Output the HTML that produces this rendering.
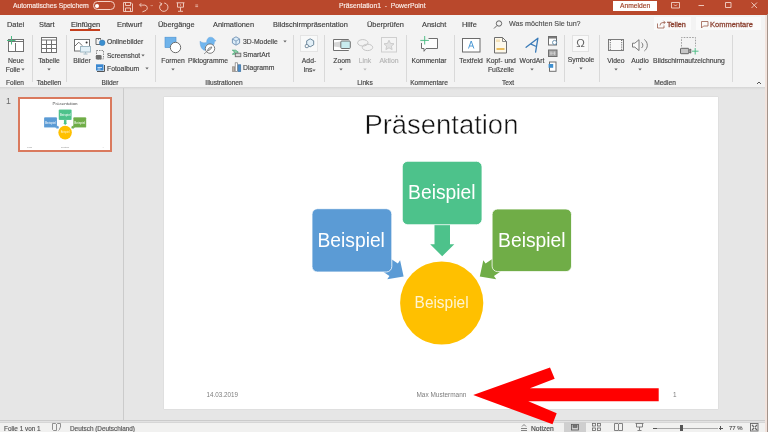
<!DOCTYPE html>
<html><head><meta charset="utf-8">
<style>
*{margin:0;padding:0;box-sizing:border-box}
html,body{width:768px;height:432px;overflow:hidden;background:#e6e6e6;font-family:"Liberation Sans",sans-serif;color:#444}
.a{will-change:transform;-webkit-text-stroke:0.15px currentColor}
.a{position:absolute;white-space:nowrap}
#title{left:0;top:0;width:768px;height:15px;background:#b9482c}
#tabs{left:0;top:15px;width:768px;height:16px;background:#f3f3f3}
#ribbon{left:0;top:31px;width:768px;height:56px;background:#f3f3f3}
#rshadow{left:0;top:87px;width:768px;height:3px;background:linear-gradient(#d4d4d4,#e0e0e0 60%,#e6e6e6)}
#status{left:0;top:420px;width:768px;height:12px;background:linear-gradient(#cbcbcb 0,#cbcbcb 1px,#e2e2e2 1px,#e2e2e2 2px,#d6d6d6 2px,#d6d6d6 3px,#f1f1f0 3px)}
#thumbs{left:0;top:88px;width:124px;height:330px;background:#e6e6e6;border-right:1px solid #cfcfcf}
.tab{font-size:7.4px;line-height:9px;top:19.6px;color:#3d3d3d}
.lbl{font-size:6.8px;color:#444}
.grp{font-size:6.8px;color:#555;top:79px}
.sep{width:1px;background:#d8d8d8;top:35px;height:49px}
</style></head><body>
<div class="a" id="title"></div>
<div class="a" id="tabs"></div>
<div class="a" id="ribbon"></div>
<div class="a" id="thumbs"></div>
<div class="a" id="rshadow"></div>
<div class="a" style="left:123px;top:88px;width:1px;height:332px;background:#cbcbcb"></div>
<div class="a" id="status"></div>


<!-- title bar content -->
<div class="a" style="left:12.5px;top:1.1px;font-size:6.7px;line-height:9px;color:#fbeee9">Automatisches Speichern</div>
<div class="a" style="left:93px;top:1.2px;width:21.6px;height:8.8px;border:0.9px solid #f6d2c6;border-radius:4.4px"></div>
<div class="a" style="left:95.2px;top:3.5px;width:4px;height:4px;background:#fff;border-radius:50%"></div>
<svg class="a" style="left:116px;top:0" width="90" height="15" viewBox="116 0 90 15" fill="none" stroke="#f4d3c6" stroke-width="0.9">
 <path d="M123.5 2.5h7.5l1.5 1.5v7.5h-9z M125.5 2.5v3h5v-3 M125.5 11.5v-3.5h5v3.5"/>
 <path d="M141.2 3.2l-1.7 1.9 1.9 1.6 M139.8 5.1h5a2.9 2.9 0 0 1 1.2 5.3l-3.6 1.5"/>
 <path d="M150.8 5.2l.9.9.9-.9" stroke-width="0.7"/>
 <path d="M161.6 3.6a4.2 4.2 0 1 0 2.6-.6 M159.6 2.6l2.2 1-1 2.1"/>
 <path d="M176.5 2.8h8 M177.5 2.8v4.4h6v-4.4 M180.5 7.2v3.8 M178 11.3h5 M180.5 4.4v1.2"/>
 <path d="M195.3 5h2.8 M195.3 6.6h2.8" stroke-width="0.7"/>
</svg>
<div class="a" style="left:339px;top:1.2px;font-size:6.8px;line-height:9px;color:#fbeee9">Präsentation1&nbsp; - &nbsp;PowerPoint</div>
<div class="a" style="left:613px;top:1px;width:44px;height:10px;background:#fff"></div>
<div class="a" style="left:620px;top:0.8px;font-size:6.7px;line-height:9px;color:#9e3f24">Anmelden</div>
<svg class="a" style="left:665px;top:0" width="103" height="15" viewBox="665 0 103 15" fill="none" stroke="#f3d4c8" stroke-width="0.9">
 <path d="M671.5 2.5h8v5.5h-8z M674 4.5l1.5 1.5 1.5-1.5"/>
 <path d="M698.5 5.5h5.5"/>
 <path d="M725.5 2.5h5.5v5h-5.5z"/>
 <path d="M751.5 2.5l5.5 5.5 M757 2.5l-5.5 5.5"/>
</svg>
<div class="a" style="left:765px;top:15px;width:2px;height:417px;background:#f2e3dc"></div>
<div class="a" style="left:767px;top:14px;width:1px;height:418px;background:#a3948c"></div>
<!-- tabs -->
<div class="a tab" style="left:7px">Datei</div>
<div class="a tab" style="left:39px">Start</div>
<div class="a tab" style="left:70.5px;color:#333">Einfügen</div>
<div class="a" style="left:70px;top:29px;width:30px;height:1.5px;background:#c43e1c"></div>
<div class="a tab" style="left:117px">Entwurf</div>
<div class="a tab" style="left:158px">Übergänge</div>
<div class="a tab" style="left:213px">Animationen</div>
<div class="a tab" style="left:273px">Bildschirmpräsentation</div>
<div class="a tab" style="left:366.5px">Überprüfen</div>
<div class="a tab" style="left:421.5px">Ansicht</div>
<div class="a tab" style="left:461.5px">Hilfe</div>
<svg class="a" style="left:492px;top:19px" width="12" height="12" fill="none" stroke="#555" stroke-width="0.9"><circle cx="7" cy="4.5" r="2.7"/><path d="M5 6.5l-3 3"/></svg>
<div class="a tab" style="left:508.5px;font-size:7.15px;color:#505050">Was möchten Sie tun?</div>
<div class="a" style="left:654px;top:17px;width:37px;height:13px;background:#fafafa"></div>
<svg class="a" style="left:656px;top:18px" width="10" height="12" fill="none" stroke="#9a5a4a" stroke-width="0.8"><path d="M1.5 5.5v4.5h6.5v-2.5 M4 7.5a3 3 0 0 1 3-3h2 M7.5 2.8l1.7 1.7-1.7 1.7"/></svg>
<div class="a" style="left:666.8px;top:19.5px;font-size:7.2px;line-height:9px;color:#8e4535;-webkit-text-stroke:0.35px #8e4535">Tellen</div>
<div class="a" style="left:696px;top:17px;width:65px;height:13px;background:#fafafa"></div>
<svg class="a" style="left:700px;top:19px" width="10" height="10" fill="none" stroke="#9a5a4a" stroke-width="0.8"><path d="M1.5 2.5h6.5v4.5h-4.5l-2 2z"/></svg>
<div class="a" style="left:710px;top:19.6px;font-size:7.5px;line-height:9px;color:#8e4535;-webkit-text-stroke:0.3px #8e4535">Kommentare</div>

<!-- ribbon -->
<svg class="a" style="left:0;top:0" width="768" height="90" viewBox="0 0 768 90">
<g fill="none" stroke-width="1">
 <!-- Neue Folie -->
 <rect x="8.5" y="39.5" width="15" height="12" fill="#fff" stroke="#717171"/>
 <path d="M8.5 41.5h15 M15.5 43v8.5" stroke="#717171"/>
 <path d="M11.5 36v8.5 M7 40.5h8.5" stroke="#4cb883"/>
 <!-- Tabelle -->
 <rect x="41.5" y="37.5" width="15" height="15" fill="#fff" stroke="#717171"/>
 <path d="M41.5 40h15 M41.5 44.5h15 M41.5 48.5h15 M46.5 40v12.5 M51.5 40v12.5" stroke="#717171"/>
 <!-- Bilder -->
 <rect x="74.5" y="39.5" width="15" height="11.5" fill="#fff" stroke="#717171"/>
 <path d="M74.5 46.5l4.3-4.3 3.5 3.5" stroke="#717171"/>
 <circle cx="86.6" cy="42.5" r="1" fill="#333" stroke="none"/>
 <rect x="80.5" y="46.5" width="10" height="5.5" fill="#e3f1f8" stroke="#9fb8c4"/>
 <path d="M85.5 52v1.5 M83.5 54h4" stroke="#9fb8c4"/>
 <!-- Onlinebilder -->
 <path d="M101 38.5h-5v6h4" stroke="#6b6b6b"/>
 <path d="M98.5 38v2 M100.5 38v2" stroke="#6b6b6b" stroke-width="0.7"/>
 <circle cx="102.2" cy="42.8" r="2.8" fill="#3b8fd0" stroke="#2a6ea8" stroke-width="0.5"/>
 <!-- Screenshot -->
 <rect x="96.5" y="50.5" width="7" height="8.5" stroke="#8a8a8a" stroke-dasharray="1.5 1"/>
 <rect x="95.8" y="55" width="5.8" height="4.5" rx="1.2" fill="#6e6e6e" stroke="none"/>
 <!-- Fotoalbum -->
 <path d="M97 71.5h7.5v-6.5" stroke="#555"/>
 <rect x="96" y="64.3" width="7.5" height="6.2" fill="#3a87d0" stroke="none"/>
 <path d="M97.5 67.5h4.5 M97.5 69h3" stroke="#e8f2fb" stroke-width="0.8"/>
 <!-- Formen -->
 <rect x="165" y="37.2" width="11" height="10.4" fill="#6fb3ea" stroke="#4a90d0" stroke-width="0.6"/>
 <circle cx="175.5" cy="47.5" r="5.2" fill="#fff" stroke="#6b6b6b"/>
 <!-- Piktogramme -->
 <path d="M200 41.2c2 1.6 4.5 2 6.6 1.2 0-3.2 1.6-5.2 3.9-5.2 2.2 0 3.5 1.3 4 2.6l1.6 .9-1.6 .9c0 3.5-2.3 6-5.3 7.2l-4.6 1.5c-2.8-.8-4.6-4-4.6-9.1z" fill="#71b6ee" stroke="#5a9bd6" stroke-width="0.4"/>
 <circle cx="210" cy="48.6" r="4.7" fill="#fff" stroke="#6e6e6e" stroke-width="0.9"/>
 <path d="M204 54l7.8-7 M207.5 50.6c.3-2 2-3.6 4.3-3.6-.3 2.1-2 3.5-4.3 3.6z" stroke="#6e6e6e" stroke-width="0.7"/>
 <!-- 3D Modelle -->
 <path d="M236 36.8l3.6 2.1v4.2l-3.6 2.1-3.6-2.1v-4.2z" fill="#dcedf9" stroke="#6e90b3" stroke-width="0.9"/>
 <path d="M232.6 39.1l3.4 2 3.4-2 M236 41.1v3.9" stroke="#6e90b3" stroke-width="0.8"/>
 <!-- SmartArt -->
 <path d="M232.3 50.2h3.5l2.5 2-2.5 2h-3.5l2.5-2z" fill="#8fd0a8" stroke="#3aa56e" stroke-width="0.7"/>
 <rect x="235.3" y="53.2" width="5.5" height="3.5" fill="#d8d8d8" stroke="#6e6e6e" stroke-width="0.9"/>
 <!-- Diagramm -->
 <rect x="232.5" y="66.8" width="2.2" height="4.7" fill="#b9b0a6" stroke="#8a8179" stroke-width="0.6"/>
 <rect x="235.2" y="62.8" width="2.4" height="8.7" fill="#fff" stroke="#777" stroke-width="0.7"/>
 <rect x="238.1" y="64.8" width="2.6" height="6.7" fill="#4a8fcf" stroke="#3a6fa0" stroke-width="0.7"/>
 <!-- Add-ins -->
 <rect x="300.5" y="35.5" width="17" height="16" fill="#f8f9f9" stroke="#e4e4e4"/>
 <path d="M310.2 38.8l3.5 2v4l-3.5 2-3.5-2v-4z" fill="#e3f0f8" stroke="#607d92" stroke-width="0.9"/>
 <rect x="305.3" y="44.6" width="3" height="3" rx="0.8" fill="#fff" stroke="#607d92" stroke-width="0.9"/>
 <!-- Zoom -->
 <path d="M348.5 40v-.5h-15v11h15v-.5" fill="#fff" stroke="#707070"/>
 <path d="M334 42.5l6.5-1v6l-6.5-1z" fill="#d8d8d8" stroke="none"/>
 <rect x="340.8" y="41" width="9.5" height="7.5" rx="1" fill="#c9ecef" stroke="#707070"/>
 <!-- Link -->
 <ellipse cx="362.8" cy="42.8" rx="5.2" ry="3.2" stroke="#c4c4c4"/>
 <ellipse cx="367.5" cy="47.4" rx="5.2" ry="3.2" stroke="#c4c4c4"/>
 <!-- Aktion -->
 <rect x="381.5" y="37.5" width="15" height="14.5" fill="#f4f4f4" stroke="#cfcfcf"/>
 <path d="M389 40.2l1.5 3.2 3.5.4-2.6 2.4.7 3.4-3.1-1.8-3.1 1.8.7-3.4-2.6-2.4 3.5-.4z" fill="#e2e2e2" stroke="#c4c4c4" stroke-width="0.8"/>
 <!-- Kommentar -->
 <path d="M428.5 38.5h9v10h-11.5l-2 2.8v-2.8h-2.5v-5.5" fill="#fdfdfd" stroke="#6e6e6e"/>
 <path d="M424.7 36v8.5 M420.3 40.4h8.6" stroke="#43b97e" stroke-width="0.9"/>
 <!-- Textfeld -->
 <rect x="462.5" y="38.5" width="17.5" height="13.5" fill="#fff" stroke="#6b6b6b"/>
 <path d="M468.5 48.5l2.7-7.5 2.7 7.5 M469.5 46h3.5" stroke="#3b8fd0" stroke-width="0.9"/>
 <!-- Kopf und Fusszeile -->
 <path d="M494.5 37.5h8l4 4v11.5h-12z" fill="#fdf8ea" stroke="#6e6e6e"/>
 <path d="M502.5 37.5v4h4" stroke="#6e6e6e" stroke-width="0.8"/>
 <path d="M496.5 49h8" stroke="#e9b54a" stroke-width="1.8"/>
 <path d="M497 39.5v2.5 M499 39.5v2.5" stroke="#e9c57a" stroke-width="0.9"/>
 <!-- WordArt -->
 <path d="M526.1 47.3L537.9 38.2 535.6 52.1 M531 44.2L536.3 46.5" stroke="#3a7bb8" stroke-width="1.3" stroke-linecap="round" stroke-linejoin="round"/>
 <!-- small icons -->
 <rect x="548.5" y="36.5" width="8" height="8.5" fill="#fff" stroke="#6e6e6e"/>
 <path d="M548.5 37.8h8" stroke="#6e6e6e" stroke-width="1.4"/>
 <circle cx="554.6" cy="42.5" r="2.1" fill="#fff" stroke="#4f7d9f" stroke-width="0.8"/>
 <rect x="548.5" y="50" width="8.5" height="6.5" fill="#a8a8a8" stroke="#6e6e6e"/>
 <path d="M551 51.5v3.5 M554.5 51.5v3.5 M550 53.2h5.5" stroke="#d8d8d8" stroke-width="0.7"/>
 <rect x="549.5" y="62" width="6.5" height="9.3" fill="#fff" stroke="#6e6e6e"/>
 <rect x="548.6" y="64" width="4.6" height="3.8" fill="#3f8fcf" stroke="none"/>
 <!-- Symbole -->
 <rect x="572.5" y="35.5" width="16" height="16" fill="#f9f9f9" stroke="#e2e2e2"/>
 <!-- Video -->
 <rect x="608.5" y="39.5" width="15" height="11" fill="#f8f8f8" stroke="#6e6e6e" stroke-width="0.9"/>
 <path d="M610.3 40v10 M621.7 40v10" stroke="#555" stroke-width="1" stroke-dasharray="1 1.2"/>
 <!-- Audio -->
 <path d="M632.5 43.2h2.3l4.2-3.5v10.9l-4.2-3.5h-2.3z" fill="#fafafa" stroke="#6e6e6e" stroke-width="0.9"/>
 <path d="M641.5 42.5a3.5 3.5 0 0 1 0 5.5 M644.3 39.5a7 7 0 0 1 0 11.5" stroke="#6e6e6e" stroke-width="0.9"/>
 <!-- Bildschirmaufzeichnung -->
 <path d="M681.5 46.5v-9h14v9" stroke="#8a8a8a" stroke-width="0.8" stroke-dasharray="1.6 1.2"/>
 <rect x="680.5" y="48.3" width="8.3" height="5.4" rx="0.6" fill="#c6c6c6" stroke="#5a5a5a" stroke-width="0.9"/>
 <path d="M688.8 50.3l2-1.2v4l-2-1.2" fill="#aaa" stroke="#5a5a5a" stroke-width="0.9"/>
 <path d="M695.2 48v6.5 M692 51.2h6.5" stroke="#43b97e" stroke-width="0.9"/>
 <!-- collapse caret -->
 <path d="M757 84l2-2 2 2" stroke="#555"/>
</g>
</svg>
<div class="a" style="left:574px;top:36.4px;width:13px;text-align:center;font-size:11.5px;line-height:14px;color:#666;-webkit-text-stroke:0">Ω</div>
<div class="a" style="left:-44.0px;top:55.6px;width:120px;text-align:center;font-size:6.8px;line-height:9px;color:#444;">Neue</div>
<div class="a" style="left:-46.7px;top:65.2px;width:120px;text-align:center;font-size:6.8px;line-height:9px;color:#444;">Folie</div>
<svg class="a" style="left:21.3px;top:68.2px" width="4" height="3"><path d="M0.3 0.6h3.4L2 2.6z" fill="#666"/></svg>
<div class="a" style="left:-45.0px;top:77.9px;width:120px;text-align:center;font-size:6.6px;line-height:9px;color:#444;">Folien</div>
<div class="a" style="left:32.3px;top:35px;width:1px;height:47px;background:#d9d9d9"></div>
<div class="a" style="left:-11.0px;top:55.6px;width:120px;text-align:center;font-size:6.8px;line-height:9px;color:#444;">Tabelle</div>
<svg class="a" style="left:46.5px;top:68.0px" width="4" height="3"><path d="M0.3 0.6h3.4L2 2.6z" fill="#666"/></svg>
<div class="a" style="left:-11.5px;top:77.9px;width:120px;text-align:center;font-size:6.6px;line-height:9px;color:#444;">Tabellen</div>
<div class="a" style="left:65.6px;top:35px;width:1px;height:47px;background:#d9d9d9"></div>
<div class="a" style="left:22.3px;top:55.6px;width:120px;text-align:center;font-size:6.8px;line-height:9px;color:#444;">Bilder</div>
<div class="a" style="left:107.0px;top:37.2px;font-size:6.8px;line-height:9px;color:#444">Onlinebilder</div>
<div class="a" style="left:107.0px;top:50.7px;font-size:6.55px;line-height:9px;color:#444">Screenshot</div>
<svg class="a" style="left:141.0px;top:53.6px" width="4" height="3"><path d="M0.3 0.6h3.4L2 2.6z" fill="#666"/></svg>
<div class="a" style="left:107.0px;top:64.3px;font-size:6.8px;line-height:9px;color:#444">Fotoalbum</div>
<svg class="a" style="left:144.5px;top:67.3px" width="4" height="3"><path d="M0.3 0.6h3.4L2 2.6z" fill="#666"/></svg>
<div class="a" style="left:50.2px;top:77.9px;width:120px;text-align:center;font-size:6.6px;line-height:9px;color:#444;">Bilder</div>
<div class="a" style="left:155.2px;top:35px;width:1px;height:47px;background:#d9d9d9"></div>
<div class="a" style="left:113.0px;top:55.6px;width:120px;text-align:center;font-size:6.8px;line-height:9px;color:#444;">Formen</div>
<svg class="a" style="left:171.0px;top:68.0px" width="4" height="3"><path d="M0.3 0.6h3.4L2 2.6z" fill="#666"/></svg>
<div class="a" style="left:148.1px;top:55.6px;width:120px;text-align:center;font-size:6.8px;line-height:9px;color:#444;">Piktogramme</div>
<div class="a" style="left:242.7px;top:36.7px;font-size:6.8px;line-height:9px;color:#444">3D-Modelle</div>
<svg class="a" style="left:283.0px;top:39.7px" width="4" height="3"><path d="M0.3 0.6h3.4L2 2.6z" fill="#666"/></svg>
<div class="a" style="left:242.7px;top:50.2px;font-size:6.8px;line-height:9px;color:#444">SmartArt</div>
<div class="a" style="left:242.7px;top:63.3px;font-size:6.8px;line-height:9px;color:#444">Diagramm</div>
<div class="a" style="left:164.2px;top:77.9px;width:120px;text-align:center;font-size:6.6px;line-height:9px;color:#444;">Illustrationen</div>
<div class="a" style="left:293.3px;top:35px;width:1px;height:47px;background:#d9d9d9"></div>
<div class="a" style="left:249.2px;top:55.6px;width:120px;text-align:center;font-size:6.8px;line-height:9px;color:#444;">Add-</div>
<div class="a" style="left:247.5px;top:65.2px;width:120px;text-align:center;font-size:6.8px;line-height:9px;color:#444;">Ins</div>
<svg class="a" style="left:312.0px;top:68.8px" width="4" height="3"><path d="M0.3 0.6h3.4L2 2.6z" fill="#666"/></svg>
<div class="a" style="left:324.4px;top:35px;width:1px;height:47px;background:#d9d9d9"></div>
<div class="a" style="left:281.6px;top:55.6px;width:120px;text-align:center;font-size:6.8px;line-height:9px;color:#444;">Zoom</div>
<svg class="a" style="left:338.6px;top:68.0px" width="4" height="3"><path d="M0.3 0.6h3.4L2 2.6z" fill="#666"/></svg>
<div class="a" style="left:305.0px;top:55.6px;width:120px;text-align:center;font-size:6.8px;line-height:9px;color:#b5b5b5;">Link</div>
<svg class="a" style="left:363.0px;top:68.0px" width="4" height="3"><path d="M0.3 0.6h3.4L2 2.6z" fill="#bbb"/></svg>
<div class="a" style="left:328.9px;top:55.6px;width:120px;text-align:center;font-size:6.8px;line-height:9px;color:#b5b5b5;">Aktion</div>
<div class="a" style="left:304.5px;top:77.9px;width:120px;text-align:center;font-size:6.6px;line-height:9px;color:#444;">Links</div>
<div class="a" style="left:405.6px;top:35px;width:1px;height:47px;background:#d9d9d9"></div>
<div class="a" style="left:369.0px;top:55.6px;width:120px;text-align:center;font-size:6.8px;line-height:9px;color:#444;">Kommentar</div>
<div class="a" style="left:368.5px;top:77.9px;width:120px;text-align:center;font-size:6.6px;line-height:9px;color:#444;">Kommentare</div>
<div class="a" style="left:453.5px;top:35px;width:1px;height:47px;background:#d9d9d9"></div>
<div class="a" style="left:411.3px;top:55.6px;width:120px;text-align:center;font-size:6.8px;line-height:9px;color:#444;">Textfeld</div>
<div class="a" style="left:440.9px;top:55.6px;width:120px;text-align:center;font-size:6.8px;line-height:9px;color:#444;">Kopf- und</div>
<div class="a" style="left:441.1px;top:65.2px;width:120px;text-align:center;font-size:6.8px;line-height:9px;color:#444;">Fußzeile</div>
<div class="a" style="left:471.7px;top:55.6px;width:120px;text-align:center;font-size:6.8px;line-height:9px;color:#444;">WordArt</div>
<svg class="a" style="left:529.7px;top:68.0px" width="4" height="3"><path d="M0.3 0.6h3.4L2 2.6z" fill="#666"/></svg>
<div class="a" style="left:447.9px;top:77.9px;width:120px;text-align:center;font-size:6.6px;line-height:9px;color:#444;">Text</div>
<div class="a" style="left:564.0px;top:35px;width:1px;height:47px;background:#d9d9d9"></div>
<div class="a" style="left:520.8px;top:55.0px;width:120px;text-align:center;font-size:6.8px;line-height:9px;color:#444;">Symbole</div>
<svg class="a" style="left:579.0px;top:66.9px" width="4" height="3"><path d="M0.3 0.6h3.4L2 2.6z" fill="#666"/></svg>
<div class="a" style="left:599.3px;top:35px;width:1px;height:47px;background:#d9d9d9"></div>
<div class="a" style="left:555.8px;top:55.6px;width:120px;text-align:center;font-size:6.8px;line-height:9px;color:#444;">Video</div>
<svg class="a" style="left:613.8px;top:68.0px" width="4" height="3"><path d="M0.3 0.6h3.4L2 2.6z" fill="#666"/></svg>
<div class="a" style="left:579.6px;top:55.6px;width:120px;text-align:center;font-size:6.8px;line-height:9px;color:#444;">Audio</div>
<svg class="a" style="left:637.6px;top:68.0px" width="4" height="3"><path d="M0.3 0.6h3.4L2 2.6z" fill="#666"/></svg>
<div class="a" style="left:629.4px;top:55.6px;width:120px;text-align:center;font-size:6.8px;line-height:9px;color:#444;">Bildschirmaufzeichnung</div>
<div class="a" style="left:605.0px;top:77.9px;width:120px;text-align:center;font-size:6.6px;line-height:9px;color:#444;">Medien</div>
<div class="a" style="left:731.7px;top:35px;width:1px;height:47px;background:#d9d9d9"></div>
<!-- thumbnail -->
<div class="a" style="left:6.3px;top:96.2px;font-size:8.8px;line-height:10px;color:#6a6a6a;-webkit-text-stroke:0">1</div>
<div class="a" style="left:17.5px;top:97px;width:94px;height:55px;border:2px solid #da7a5e;background:#fff"></div>
<svg class="a" style="left:20px;top:99px;-webkit-text-stroke:0" width="90" height="51" viewBox="0 0 554 312">
 <text x="277.4" y="36.7" text-anchor="middle" font-size="27" fill="#111" stroke="#fff" stroke-width="0.5" textLength="154" lengthAdjust="spacingAndGlyphs">Präsentation</text>
 <path d="M0 0l-12 -11.5v4h-18v15h18v4z" transform="translate(239.6 179.5) rotate(34)" fill="#5b9bd5"/>
 <path d="M0 0l-12 -11.5v4h-18v15h18v4z" transform="translate(315.8 179.5) rotate(146)" fill="#70ad47"/>
 <path d="M0 0l-12 -12.1v4.3h-20v15.5h20v4.3z" transform="translate(278.2 159.3) rotate(90)" fill="#4dc28b"/>
 <rect x="148" y="111.7" width="79.8" height="63.3" rx="5.5" fill="#5b9bd5" stroke="#fff" stroke-width="0.8"/>
 <rect x="238.3" y="64.3" width="79.7" height="63.4" rx="5.5" fill="#4dc28b" stroke="#fff" stroke-width="0.8"/>
 <rect x="328.1" y="112" width="79.4" height="62.6" rx="5.5" fill="#70ad47" stroke="#fff" stroke-width="0.8"/>
 <circle cx="277.7" cy="206" r="41.6" fill="#ffc000"/>
 <g fill="#fff" font-size="19.5" text-anchor="middle">
  <text x="187.2" y="150" textLength="67.4" lengthAdjust="spacingAndGlyphs">Beispiel</text>
  <text x="277.8" y="102.1" textLength="67.4" lengthAdjust="spacingAndGlyphs">Beispiel</text>
  <text x="367.8" y="150" textLength="67.4" lengthAdjust="spacingAndGlyphs">Beispiel</text>
 </g>
 <text x="277.6" y="211.1" fill="#fff4d0" font-size="16.3" text-anchor="middle" textLength="54" lengthAdjust="spacingAndGlyphs">Beispiel</text>
 <g fill="#7c7c7c" font-size="6.4">
  <text x="42.6" y="299.7" textLength="31.5" lengthAdjust="spacingAndGlyphs">14.03.2019</text>
  <text x="252.4" y="299.7" textLength="50" lengthAdjust="spacingAndGlyphs">Max Mustermann</text>
  <text x="509" y="299.7">1</text>
 </g>
</svg>
<!-- slide -->
<div class="a" style="left:164px;top:97px;width:554px;height:312px;background:#fff;box-shadow:0 0 1px #bbb"></div>
<svg class="a" style="left:164px;top:97px;-webkit-text-stroke:0" width="554" height="312" viewBox="0 0 554 312" font-family="Liberation Sans, sans-serif">
 <text x="277.4" y="36.7" text-anchor="middle" font-size="27" fill="#111" stroke="#fff" stroke-width="0.5" textLength="154" lengthAdjust="spacingAndGlyphs">Präsentation</text>
 <path d="M0 0l-12 -11.5v4h-18v15h18v4z" transform="translate(239.6 179.5) rotate(34)" fill="#5b9bd5"/>
 <path d="M0 0l-12 -11.5v4h-18v15h18v4z" transform="translate(315.8 179.5) rotate(146)" fill="#70ad47"/>
 <path d="M0 0l-12 -12.1v4.3h-20v15.5h20v4.3z" transform="translate(278.2 159.3) rotate(90)" fill="#4dc28b"/>
 <rect x="148" y="111.7" width="79.8" height="63.3" rx="5.5" fill="#5b9bd5" stroke="#fff" stroke-width="0.8"/>
 <rect x="238.3" y="64.3" width="79.7" height="63.4" rx="5.5" fill="#4dc28b" stroke="#fff" stroke-width="0.8"/>
 <rect x="328.1" y="112" width="79.4" height="62.6" rx="5.5" fill="#70ad47" stroke="#fff" stroke-width="0.8"/>
 <circle cx="277.7" cy="206" r="41.6" fill="#ffc000"/>
 <g fill="#fff" font-size="19.5" text-anchor="middle">
  <text x="187.2" y="150" textLength="67.4" lengthAdjust="spacingAndGlyphs">Beispiel</text>
  <text x="277.8" y="102.1" textLength="67.4" lengthAdjust="spacingAndGlyphs">Beispiel</text>
  <text x="367.8" y="150" textLength="67.4" lengthAdjust="spacingAndGlyphs">Beispiel</text>
 </g>
 <text x="277.6" y="211.1" fill="#fff4d0" font-size="16.3" text-anchor="middle" textLength="54" lengthAdjust="spacingAndGlyphs">Beispiel</text>
 <g fill="#7c7c7c" font-size="6.4">
  <text x="42.6" y="299.7" textLength="31.5" lengthAdjust="spacingAndGlyphs">14.03.2019</text>
  <text x="252.4" y="299.7" textLength="50" lengthAdjust="spacingAndGlyphs">Max Mustermann</text>
  <text x="509" y="299.7">1</text>
 </g>
</svg>
<!-- status bar content -->
<div class="a" style="left:4px;top:423.5px;font-size:6.4px;line-height:9px;color:#555">Folie 1 von 1</div>
<svg class="a" style="left:50px;top:422px" width="12" height="10" fill="none" stroke="#777" stroke-width="0.8"><path d="M2.5 1.5h3l1 1v6h-3l-1-1z M6.5 2.5l1-1h3v4 M8.5 8.5l1-1 .5-2"/></svg>
<div class="a" style="left:70px;top:423.5px;font-size:6.4px;line-height:9px;color:#555">Deutsch (Deutschland)</div>
<svg class="a" style="left:519px;top:422px" width="10" height="10" fill="none" stroke="#666" stroke-width="0.8"><path d="M3 4.5l2-2 2 2 M2 6.5h6 M2 8.5h6"/></svg>
<div class="a" style="left:530.5px;top:423.5px;font-size:6.7px;line-height:9px;color:#444">Notizen</div>
<div class="a" style="left:564px;top:422.3px;width:22px;height:10px;background:#cfcfcf"></div>
<svg class="a" style="left:560px;top:420px" width="100" height="12" fill="none" stroke="#666" stroke-width="0.8">
 <rect x="11.5" y="4.5" width="7" height="5.5" stroke="#555"/><rect x="13" y="5.5" width="4" height="2" fill="#777" stroke="#555" stroke-width="0.6"/>
 <rect x="32.5" y="3.5" width="3" height="2.5"/><rect x="37.5" y="3.5" width="3" height="2.5"/><rect x="32.5" y="8" width="3" height="2.5"/><rect x="37.5" y="8" width="3" height="2.5"/>
 <path d="M54.5 3.5h3.5l.5.5.5-.5h3.5v7h-3.5l-.5.5-.5-.5h-3.5z M58.5 4v6.5"/>
 <path d="M75.5 3.5h8 M76.5 3.5v3.5h6v-3.5 M79.5 7v3 M77.5 10.5h4"/>
</svg>
<div class="a" style="left:653px;top:427.5px;width:3.5px;height:1px;background:#555"></div>
<div class="a" style="left:657px;top:428px;width:61px;height:0.8px;background:#aaa"></div>
<div class="a" style="left:680px;top:424.5px;width:2.5px;height:6px;background:#555"></div>
<div class="a" style="left:718.5px;top:427.5px;width:4px;height:1px;background:#555"></div>
<div class="a" style="left:720px;top:426px;width:1px;height:4px;background:#555"></div>
<div class="a" style="left:729px;top:423.5px;font-size:6px;line-height:9px;color:#555">77 %</div>
<svg class="a" style="left:749px;top:422px" width="10" height="10" fill="none" stroke="#666" stroke-width="0.9"><rect x="1.5" y="1.5" width="7.5" height="7.5"/><path d="M3 3l2 2 M8 3l-2 2 M3 8l2-2 M8 8l-2-2" stroke-width="1.2"/></svg>


<!-- red arrow -->
<svg class="a" style="left:0;top:0" width="768" height="432"><path d="M473.2 395L550 367.5L554.7 378.7L530 388.3H658.7V401.3H528.3L556.7 413.3L552.5 424.2Z" fill="#ff0000"/></svg>
</body></html>
